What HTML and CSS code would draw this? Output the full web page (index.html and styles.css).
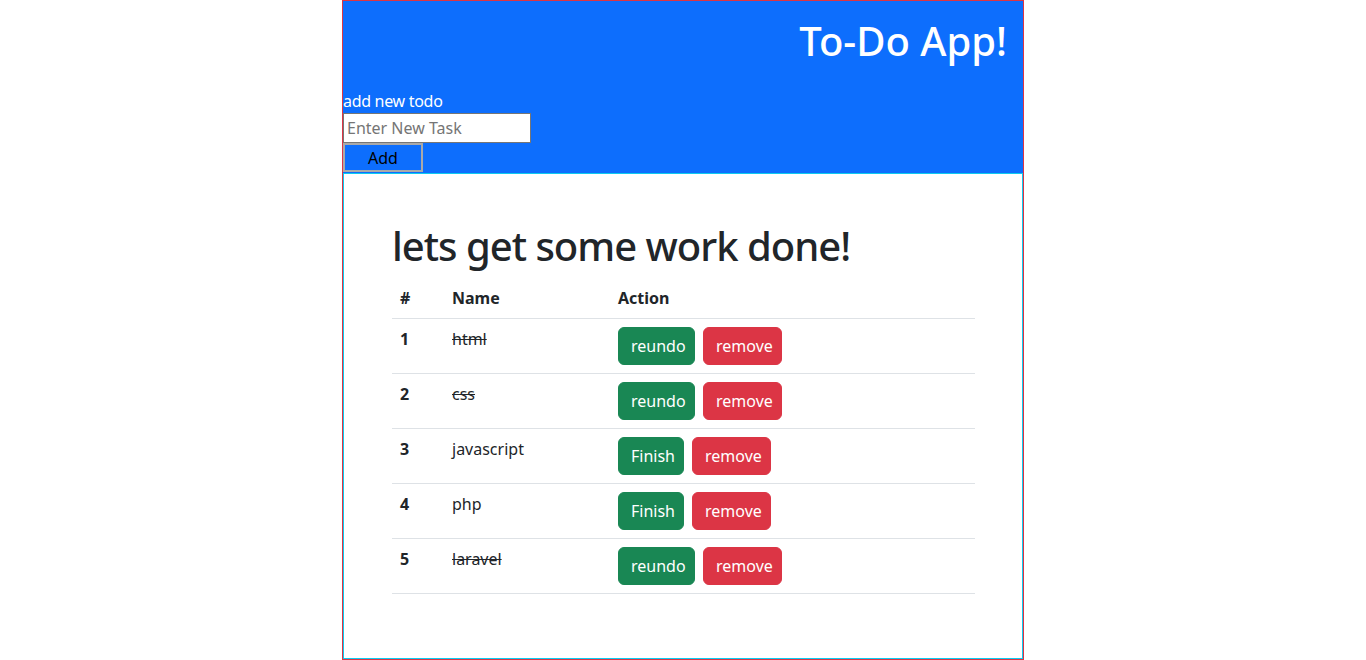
FILE: index.html
```html
<!DOCTYPE html>
<html lang="en">
<head>
<meta charset="utf-8">
<title>To-Do App</title>
<link rel="stylesheet" href="styles.css">
</head>
<body>
<div class="app">
  <header class="app-header">
    <h1 class="app-title">To-Do App!</h1>
    <form class="add-form">
      <label class="add-label" for="task">add new todo</label>
      <input class="add-input" id="task" type="text" placeholder="Enter New Task">
      <button class="add-btn" type="button">Add</button>
    </form>
  </header>
  <main class="app-body">
    <h1 class="page-title">lets get some work done!</h1>
    <table class="todo-table">
      <thead>
        <tr><th class="col-num">#</th><th class="col-name">Name</th><th>Action</th></tr>
      </thead>
      <tbody>
        <tr><th>1</th><td class="done">html</td><td><button class="btn btn-green btn-reundo">reundo</button><button class="btn btn-red">remove</button></td></tr>
        <tr><th>2</th><td class="done">css</td><td><button class="btn btn-green btn-reundo">reundo</button><button class="btn btn-red">remove</button></td></tr>
        <tr><th>3</th><td>javascript</td><td><button class="btn btn-green btn-finish">Finish</button><button class="btn btn-red">remove</button></td></tr>
        <tr><th>4</th><td>php</td><td><button class="btn btn-green btn-finish">Finish</button><button class="btn btn-red">remove</button></td></tr>
        <tr><th>5</th><td class="done">laravel</td><td><button class="btn btn-green btn-reundo">reundo</button><button class="btn btn-red">remove</button></td></tr>
      </tbody>
    </table>
  </main>
</div>
</body>
</html>
```
FILE: styles.css
```css
* { box-sizing: border-box; }
html, body { margin: 0; padding: 0; background: #fff; }
body {
  font-family: "Noto Sans", "Open Sans", sans-serif;
  font-size: 16px;
  line-height: 1.5;
  color: #212529;
  overflow: hidden;
  height: 660px;
}
.app {
  width: 682px;
  height: 660px;
  margin: 0 auto;
  border: 1px solid #dc3545;
  display: flex;
  flex-direction: column;
}
.app-header {
  background: #0d6efd;
  color: #fff;
  height: 172px;
}
.app-title {
  margin: 0;
  padding: 16px 16px 0;
  text-align: right;
  font-size: 40px;
  font-weight: 500;
  line-height: 48px;
}
.add-form {
  margin: 24px 0 0;
  display: flex;
  flex-direction: column;
  align-items: flex-start;
}
.add-label { line-height: 24px; letter-spacing: -0.3px; }
.add-input {
  width: 188px;
  height: 30px;
  margin: 0;
  border: 1px solid #767676;
  padding: 0 3px;
  font: inherit;
  font-size: 16px;
  color: #212529;
  background: #fff;
}
.add-input::placeholder { color: #757575; }
.add-btn {
  width: 80px;
  height: 29px;
  margin: 0;
  padding: 0;
  background: #0d6efd;
  border: 2px solid #a9a9a9;
  color: #000;
  font: inherit;
  font-size: 16px;
  line-height: 24px;
}
.app-body {
  flex: 1;
  border: 1px solid #0dcaf0;
  padding: 48px 47px 47px 48px;
}
.page-title {
  margin: 0 0 8px;
  font-size: 40px;
  font-weight: 500;
  line-height: 48px;
  letter-spacing: -1px;
}
.todo-table {
  width: 100%;
  border-collapse: collapse;
}
.todo-table th, .todo-table td {
  padding: 8px;
  border-bottom: 1px solid #dee2e6;
  text-align: left;
  vertical-align: top;
}
.todo-table th { font-weight: 700; }
.col-num { width: 52px; }
.col-name { width: 166px; }
.done { text-decoration: line-through; }
.btn {
  display: inline-block;
  height: 38px;
  padding: 6px 12px;
  margin: 0 8px 0 0;
  border: 1px solid transparent;
  border-radius: 6px;
  color: #fff;
  font: inherit;
  font-size: 16px;
  line-height: 24px;
  text-align: center;
  vertical-align: top;
}
.btn-green { background: #198754; border-color: #198754; }
.btn-red { background: #dc3545; border-color: #dc3545; width: 79px; }
.btn-reundo { width: 77px; }
.btn-finish { width: 66px; }
```
